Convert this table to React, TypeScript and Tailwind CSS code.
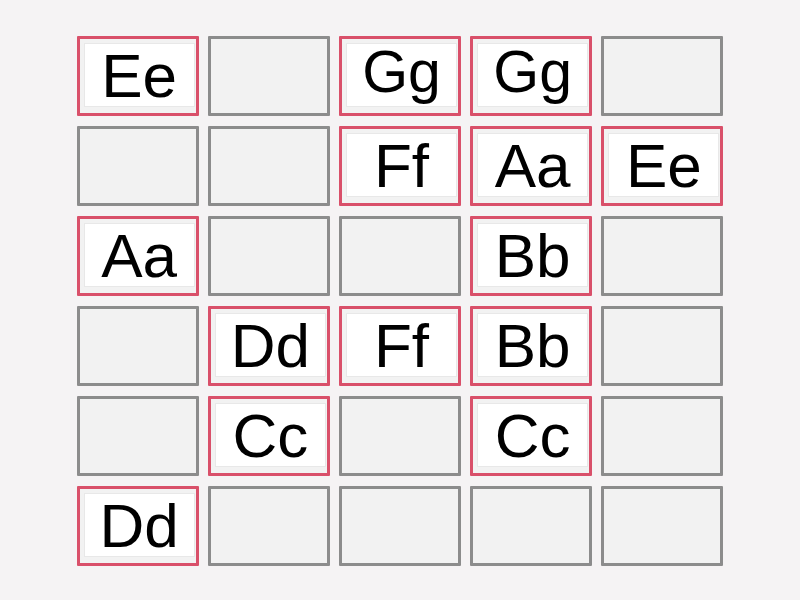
const rows: string[][] = [
  ["Ee", "", "Gg", "Gg", ""],
  ["", "", "Ff", "Aa", "Ee"],
  ["Aa", "", "", "Bb", ""],
  ["", "Dd", "Ff", "Bb", ""],
  ["", "Cc", "", "Cc", ""],
  ["Dd", "", "", "", ""],
];

function Cell({ label }: { label: string }) {
  if (!label) {
    return (
      <div className="h-[80px] border-[3px] border-[#8c8c8c] bg-[#f2f2f2] rounded-[1px]" />
    );
  }
  // tiles with a descender sit higher and a little smaller, like the original
  const hasDescender = label === "Gg";
  return (
    <div className="h-[80px] border-[3px] border-[#d9506a] bg-[#f2f2f2] rounded-[1px] pt-[4px] pl-[4px] pr-[1px] pb-[6px]">
      <div className="h-full bg-white border border-[#e8e8e8] flex items-center justify-center">
        <span
          className={
            hasDescender
              ? "text-[59px] leading-none text-black font-['Liberation_Sans',Arial,sans-serif] -translate-y-[3px]"
              : "text-[62px] leading-none text-black font-['Liberation_Sans',Arial,sans-serif] translate-y-[1px]"
          }
        >
          {label}
        </span>
      </div>
    </div>
  );
}

export default function App() {
  return (
    <div className="w-[800px] h-[600px] bg-[#f5f3f4] pt-[36px]">
      <div className="mx-auto w-[647px] grid grid-cols-5 gap-x-[9px] gap-y-[10px]">
        {rows.flat().map((label, i) => (
          <Cell key={i} label={label} />
        ))}
      </div>
    </div>
  );
}
